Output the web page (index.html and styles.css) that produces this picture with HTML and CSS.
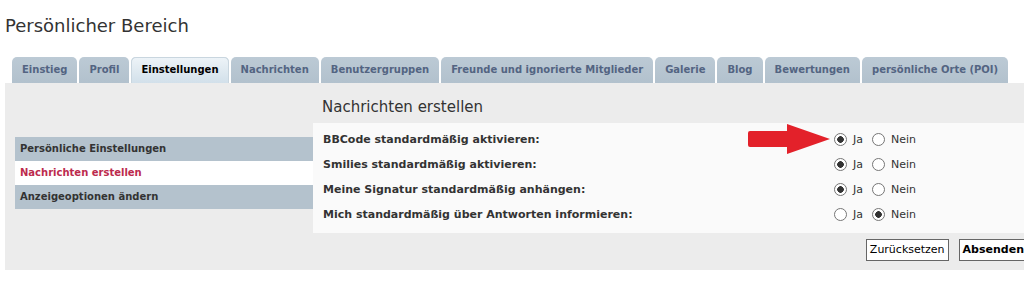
FILE: index.html
```html
<!DOCTYPE html>
<html>

<head lang="de">
    <meta charset="UTF-8">
    <title>Persönlicher Bereich</title>
    <link rel="stylesheet" href="styles.css">
</head>

<body>
    <h2 class="page-title">Persönlicher Bereich</h2>

    <!-- Reiter -->
    <ul class="tabs">
        <li><a href="javascript:;">Einstieg</a></li>
        <li><a href="javascript:;">Profil</a></li>
        <li class="active"><a href="javascript:;">Einstellungen</a></li>
        <li><a href="javascript:;">Nachrichten</a></li>
        <li><a href="javascript:;">Benutzergruppen</a></li>
        <li><a href="javascript:;">Freunde und ignorierte Mitglieder</a></li>
        <li><a href="javascript:;">Galerie</a></li>
        <li><a href="javascript:;">Blog</a></li>
        <li><a href="javascript:;">Bewertungen</a></li>
        <li><a href="javascript:;">persönliche Orte (POI)</a></li>
    </ul>

    <div class="panel">
        <!-- linkes Menü -->
        <ul class="side-menu">
            <li><a href="javascript:;">Persönliche Einstellungen</a></li>
            <li class="current"><a href="javascript:;">Nachrichten erstellen</a></li>
            <li><a href="javascript:;">Anzeigeoptionen ändern</a></li>
        </ul>

        <div class="content">
            <h3 class="content-title">Nachrichten erstellen</h3>

            <form class="options">
                <div class="option-box">
                    <div class="option-row">
                        <label class="option-label">BBCode standardmäßig aktivieren:</label>
                        <div class="option-choice">
                            <label><input type="radio" name="bbcode" checked> Ja</label>
                            <label><input type="radio" name="bbcode"> Nein</label>
                        </div>
                    </div>
                    <div class="option-row">
                        <label class="option-label">Smilies standardmäßig aktivieren:</label>
                        <div class="option-choice">
                            <label><input type="radio" name="smilies" checked> Ja</label>
                            <label><input type="radio" name="smilies"> Nein</label>
                        </div>
                    </div>
                    <div class="option-row">
                        <label class="option-label">Meine Signatur standardmäßig anhängen:</label>
                        <div class="option-choice">
                            <label><input type="radio" name="sig" checked> Ja</label>
                            <label><input type="radio" name="sig"> Nein</label>
                        </div>
                    </div>
                    <div class="option-row">
                        <label class="option-label">Mich standardmäßig über Antworten informieren:</label>
                        <div class="option-choice">
                            <label><input type="radio" name="notify"> Ja</label>
                            <label><input type="radio" name="notify" checked> Nein</label>
                        </div>
                    </div>

                    <!-- roter Pfeil -->
                    <svg class="arrow" width="90" height="36" viewBox="0 0 90 36">
                        <path d="M3 11 Q3 9 5 9 L42 9 L42 2 L85 17 L42 32 L42 25 L5 25 Q3 25 3 23 Z" fill="#e3212a"/>
                    </svg>
                </div>

                <div class="buttons">
                    <button type="reset" class="btn">Zurücksetzen</button>
                    <button type="button" class="btn btn-main">Absenden</button>
                </div>
            </form>
        </div>
    </div>
</body>

</html>
```

FILE: styles.css
```css
* {
    padding: 0px;
    margin: 0px;
}

html {
    overflow: hidden;
}

body {
    padding-left: 5px;
    font-family: "DejaVu Sans", Verdana, sans-serif;
    color: #333333;
    background: #ffffff;
}

ul {
    list-style: none;
}

a {
    text-decoration: none;
}

.page-title {
    margin-top: 15px;
    font-size: 18px;
    line-height: 22px;
    font-weight: normal;
    color: #333333;
}

/* Reiter oben */
.tabs {
    display: flex;
    gap: 2px;
    margin-top: 20px;
    padding-left: 7px;
}

.tabs li {
    height: 26px;
    border-radius: 5px 5px 0 0;
    background: linear-gradient(#bccad5, #b2c1cd);
}

.tabs a {
    display: block;
    padding: 0 10px;
    line-height: 26px;
    font-size: 10px;
    font-weight: bold;
    color: #536482;
    white-space: nowrap;
}

.tabs li.active {
    background: linear-gradient(#eef4f8, #d2e0ea);
    box-shadow: inset 0 1px 0 #c9d6df, inset 1px 0 0 #c9d6df, inset -1px 0 0 #c9d6df;
}

.tabs li.active a {
    color: #000000;
}

/* grauer Bereich */
.panel {
    display: flex;
    width: 1040px;
    padding: 14px 0 9px 10px;
    box-sizing: border-box;
    background: #ececec;
}

.side-menu {
    width: 298px;
    margin-top: 40px;
    flex-shrink: 0;
}

.side-menu li {
    height: 24px;
    background: #b4c2cd;
}

.side-menu a {
    display: block;
    padding-left: 5px;
    line-height: 24px;
    font-size: 10px;
    font-weight: bold;
    color: #333333;
}

.side-menu li.current {
    background: #ffffff;
}

.side-menu li.current a {
    color: #bc2a4d;
}

.content {
    flex: 1;
}

.content-title {
    padding-left: 9px;
    font-size: 15px;
    line-height: 20px;
    font-weight: normal;
    color: #333333;
    margin-bottom: 6px;
}

.option-box {
    position: relative;
    padding: 4px 10px 6px 10px;
    background: #fafafa;
}

.option-row {
    display: flex;
    height: 25px;
    line-height: 25px;
}

.option-label {
    width: 511px;
    font-size: 11px;
    font-weight: bold;
    color: #333333;
}

.option-choice {
    display: flex;
    gap: 9px;
    font-size: 11px;
    color: #333333;
}

.option-choice label {
    display: flex;
    align-items: center;
    gap: 3px;
}

.option-choice input {
    appearance: none;
    width: 13px;
    height: 13px;
    margin-right: 3px;
    border: 1px solid #767676;
    border-radius: 50%;
    background: #ffffff;
}

.option-choice input:checked {
    background: radial-gradient(circle, #333333 0 3px, #ffffff 3.6px);
}

/* Pfeil liegt über dem Inhalt */
.arrow {
    position: absolute;
    left: 432px;
    top: -1px;
}

.buttons {
    display: flex;
    justify-content: flex-end;
    gap: 10px;
    margin-top: 6px;
    padding-right: 17px;
}

.btn {
    padding: 3px 3px;
    font-family: "DejaVu Sans", Verdana, sans-serif;
    font-size: 11px;
    line-height: 14px;
    color: #000000;
    background: #ffffff;
    border: 1px solid #666666;
}

.btn-main {
    font-weight: bold;
}
```
